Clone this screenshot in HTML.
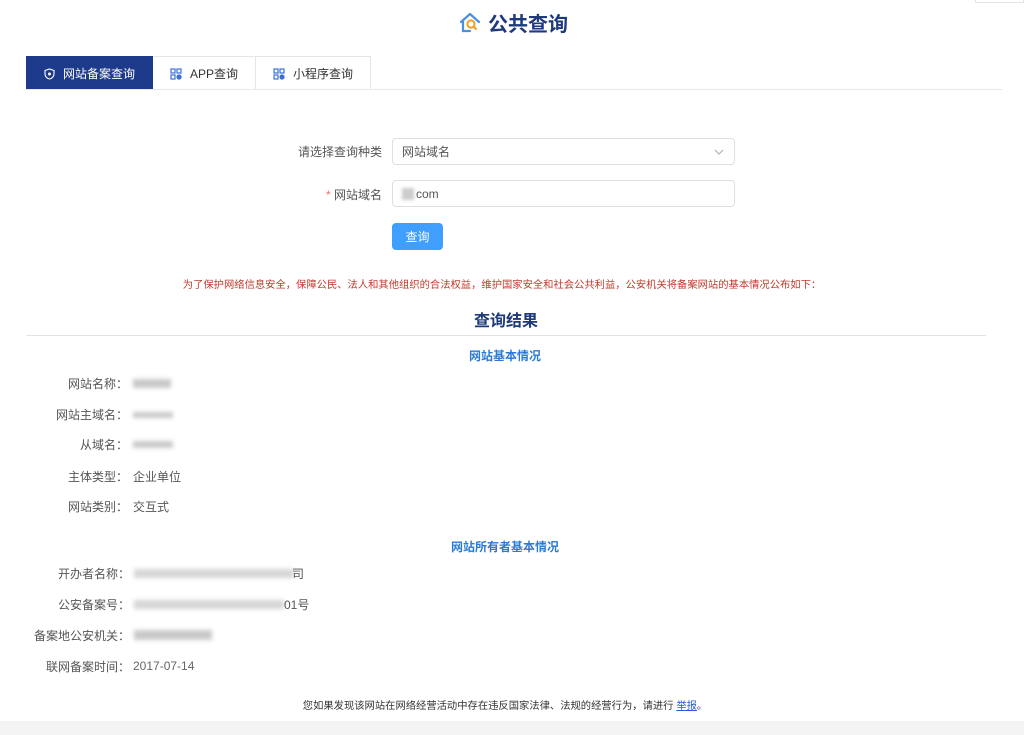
<!DOCTYPE html>
<html><head><meta charset="utf-8">
<style>
*{margin:0;padding:0;box-sizing:border-box}
body{width:1024px;height:735px;background:#fff;font-family:"Liberation Sans","Noto Sans CJK SC",sans-serif;position:relative;overflow:hidden;color:#333}
.a{position:absolute;white-space:nowrap}
.title{left:458px;top:8px;font-size:20px;font-weight:bold;color:#1e3a7a;display:flex;align-items:center;gap:6px}
.tabs{left:26px;top:56px;height:34px;display:flex}
.tab{height:34px;border:1px solid #e6e6e6;border-bottom:none;display:flex;align-items:center;justify-content:center;font-size:12px;color:#333;gap:8px}
.tabline{left:26px;top:89px;width:976px;height:1px;background:#e8e8e8}
.lbl{font-size:12px;color:#555;text-align:right}
.box{border:1px solid #dcdfe6;border-radius:4px;height:27px;background:#fff;font-size:12px;color:#555;padding-left:9px;display:flex;align-items:center}
.btn{left:392px;top:223px;width:51px;height:27px;background:#409eff;border-radius:4px;color:#fff;font-size:12px;display:flex;align-items:center;justify-content:center}
.red{left:0;width:1004px;top:276px;text-align:center;font-size:10.3px;color:#c0392b}
.h{font-weight:bold;text-align:center}
.row{font-size:12px;color:#555}
.k{position:absolute;text-align:right;width:122px}
.blur{position:absolute;height:9px;background:#bbb;filter:blur(2px);opacity:.8}
</style></head><body>
<div class="a title">
<svg width="24" height="24" viewBox="0 0 24 24"><path d="M3 11 L12 3 L21 11" fill="none" stroke="#4a90e2" stroke-width="2.2" stroke-linecap="round" stroke-linejoin="round"/><path d="M5 10 V20 H12" fill="none" stroke="#4a90e2" stroke-width="2.2" stroke-linecap="round"/><circle cx="13" cy="13" r="3.6" fill="none" stroke="#f0a020" stroke-width="2"/><path d="M15.6 15.6 L18 18" stroke="#f0a020" stroke-width="2" stroke-linecap="round"/></svg>
<span>公共查询</span></div>

<div class="a tabs">
<div class="tab" style="width:127px;background:#1e3a8a;color:#fff;border-color:#1e3a8a">
<svg width="11" height="12" viewBox="0 0 11 12"><path d="M5.5 1 L10 2.5 V6 C10 8.5 8 10.5 5.5 11 C3 10.5 1 8.5 1 6 V2.5 Z" fill="none" stroke="#fff" stroke-width="1.1"/><circle cx="5.5" cy="6" r="1.5" fill="#fff"/></svg>网站备案查询</div>
<div class="tab" style="width:103px;border-left:none">
<svg width="12" height="12" viewBox="0 0 12 12" fill="none" stroke="#3a6fd8" stroke-width="1.2"><rect x="1" y="1" width="4" height="4"/><rect x="7" y="1" width="4" height="4"/><rect x="1" y="7" width="4" height="4"/><circle cx="9" cy="9" r="2" fill="#3a6fd8"/></svg>APP查询</div>
<div class="tab" style="width:115px;border-left:none">
<svg width="12" height="12" viewBox="0 0 12 12" fill="none" stroke="#3a6fd8" stroke-width="1.2"><rect x="1" y="1" width="4" height="4"/><rect x="7" y="1" width="4" height="4"/><rect x="1" y="7" width="4" height="4"/><circle cx="9" cy="9" r="2" fill="#3a6fd8"/></svg>小程序查询</div>
</div>
<div class="a tabline"></div>

<div class="a lbl" style="left:270px;width:112px;top:143px">请选择查询种类</div>
<div class="a box" style="left:392px;top:138px;width:343px">网站域名
<svg style="position:absolute;right:10px;top:10px" width="10" height="6" viewBox="0 0 10 6"><path d="M1 1 L5 5 L9 1" fill="none" stroke="#aaa" stroke-width="1"/></svg></div>
<div class="a lbl" style="left:270px;width:112px;top:186px"><span style="color:#f56c6c">*</span> 网站域名</div>
<div class="a box" style="left:392px;top:180px;width:343px"><span style="display:inline-block;width:12px;height:12px;background:#ccc;filter:blur(1.5px);margin-right:2px"></span>com</div>
<div class="a btn">查询</div>

<div class="a red">为了保护网络信息安全，保障公民、法人和其他组织的合法权益，维护国家安全和社会公共利益，公安机关将备案网站的基本情况公布如下：</div>
<div class="a h" style="left:0;width:1012px;top:307px;font-size:16px;color:#1e3a7a">查询结果</div>
<div class="a" style="left:26px;top:335px;width:960px;height:1px;background:#e3e3e3"></div>
<div class="a h" style="left:0;width:1010px;top:347px;font-size:12px;color:#2a7ad6">网站基本情况</div>

<div class="a row" style="left:0;top:375px;width:400px;height:20px"><span class="k" style="left:6px">网站名称：</span><span class="blur" style="left:133px;top:4px;width:38px"></span></div>
<div class="a row" style="left:0;top:406px;width:400px;height:20px"><span class="k" style="left:6px">网站主域名：</span><span class="blur" style="left:133px;top:6px;width:40px;height:6px"></span></div>
<div class="a row" style="left:0;top:436px;width:400px;height:20px"><span class="k" style="left:6px">从域名：</span><span class="blur" style="left:133px;top:5px;width:40px;height:7px"></span></div>
<div class="a row" style="left:0;top:468px;width:400px;height:20px"><span class="k" style="left:6px">主体类型：</span><span style="position:absolute;left:133px">企业单位</span></div>
<div class="a row" style="left:0;top:498px;width:400px;height:20px"><span class="k" style="left:6px">网站类别：</span><span style="position:absolute;left:133px">交互式</span></div>

<div class="a h" style="left:0;width:1010px;top:538px;font-size:12px;color:#2a7ad6">网站所有者基本情况</div>
<div class="a row" style="left:0;top:565px;width:500px;height:20px"><span class="k" style="left:8px">开办者名称：</span><span class="blur" style="left:134px;top:4px;width:160px;opacity:.6"></span><span style="position:absolute;left:292px">司</span></div>
<div class="a row" style="left:0;top:596px;width:500px;height:20px"><span class="k" style="left:8px">公安备案号：</span><span class="blur" style="left:134px;top:4px;width:150px;opacity:.6"></span><span style="position:absolute;left:284px">01号</span></div>
<div class="a row" style="left:0;top:627px;width:500px;height:20px"><span class="k" style="left:8px">备案地公安机关：</span><span class="blur" style="left:134px;top:3px;width:78px;height:10px"></span></div>
<div class="a row" style="left:0;top:658px;width:500px;height:20px"><span class="k" style="left:8px">联网备案时间：</span><span style="position:absolute;left:133px;top:1px;color:#666">2017-07-14</span></div>

<div class="a" style="left:0;width:1010px;top:697px;text-align:center;font-size:10.3px;color:#333">您如果发现该网站在网络经营活动中存在违反国家法律、法规的经营行为，请进行 <span style="color:#2a5bd6;text-decoration:underline">举报</span>。</div>
<div class="a" style="left:0;top:721px;width:1024px;height:14px;background:#f4f4f4"></div>
<div class="a" style="left:975px;top:0;width:49px;height:3px;border:1px solid #e5e5e5;border-top:none"></div>
</body></html>
